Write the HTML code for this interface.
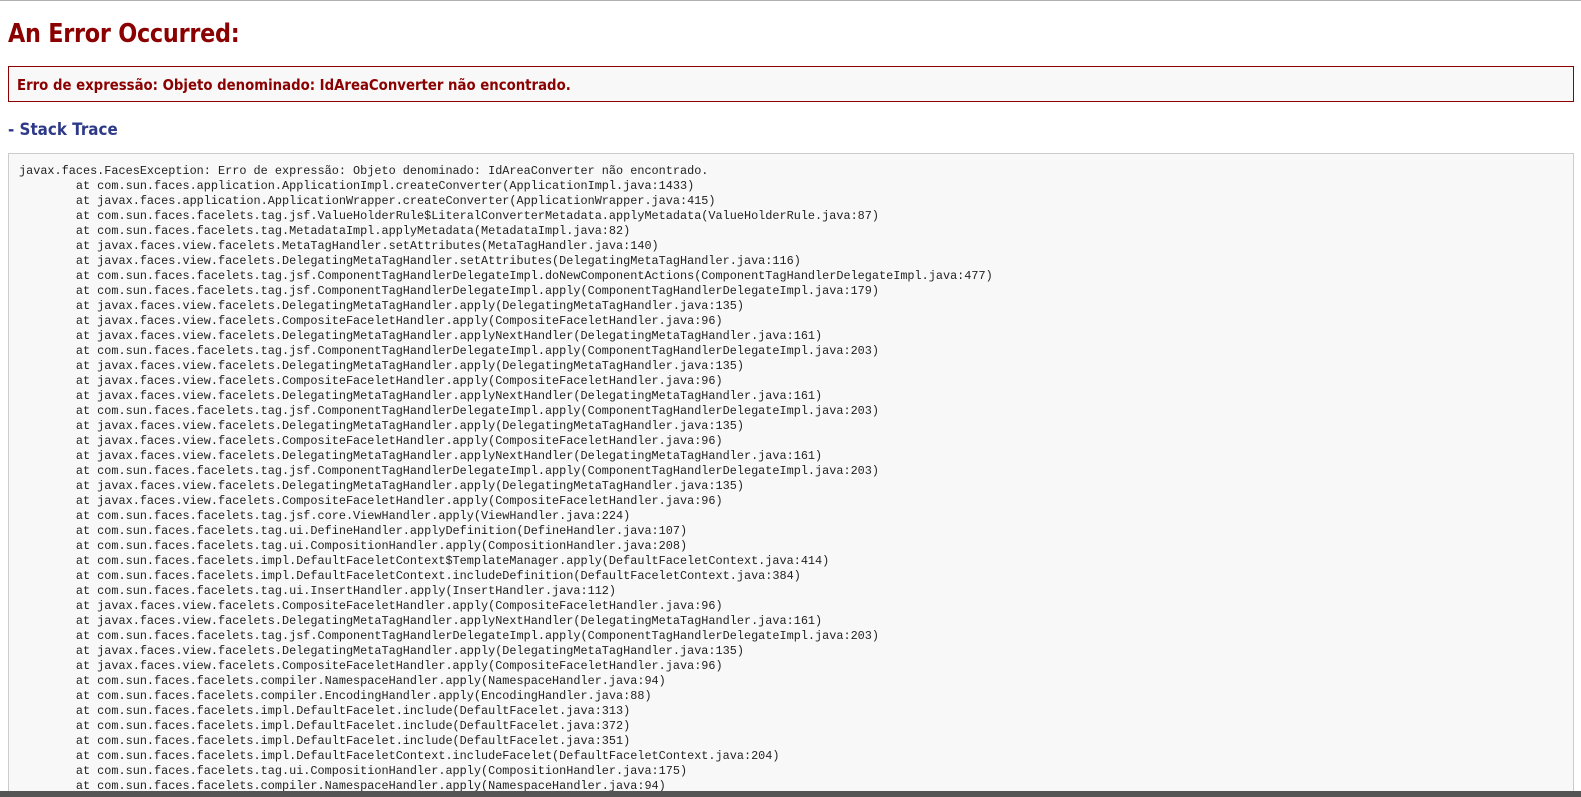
<!DOCTYPE html>
<html><head><meta charset="utf-8">
<style>
html,body{margin:0;padding:0;background:#fff;width:1581px;height:797px;overflow:hidden;position:relative}
.top{position:absolute;left:0;top:0;width:1581px;height:1px;background:#b0b0b0}
h1{position:absolute;left:8px;top:19px;margin:0;font:bold 26px "DejaVu Sans","Liberation Sans",sans-serif;color:#8b0000;letter-spacing:-0.3px;transform:scaleX(0.86);transform-origin:left;white-space:nowrap}
.err{position:absolute;left:8px;top:66px;width:1564px;height:34px;border:1px solid #8b0000;background:#f8f8f8}
.err span{position:absolute;left:8px;top:9px;font:bold 15px "DejaVu Sans","Liberation Sans",sans-serif;color:#8b0000;white-space:nowrap;transform:scaleX(0.886);transform-origin:left}
h2{position:absolute;left:8px;top:120px;margin:0;font:bold 17px "DejaVu Sans","Liberation Sans",sans-serif;color:#2e3a87;transform:scaleX(0.89);transform-origin:left;white-space:nowrap}
.st{position:absolute;left:8px;top:153px;width:1564px;height:660px;border:1px solid #ccc;background:#f8f8f8}
pre{position:absolute;left:10px;top:10px;margin:0;font:11.85px/15px "Liberation Mono",monospace;color:#222;tab-size:8}
.bar{position:absolute;left:0;top:791px;width:1581px;height:6px;background:#555}
</style></head><body>
<div class="top"></div>
<h1>An Error Occurred:</h1>
<div class="err"><span>Erro de expressão: Objeto denominado: IdAreaConverter não encontrado.</span></div>
<h2>- Stack Trace</h2>
<div class="st"><pre>javax.faces.FacesException: Erro de expressão: Objeto denominado: IdAreaConverter não encontrado.
	at com.sun.faces.application.ApplicationImpl.createConverter(ApplicationImpl.java:1433)
	at javax.faces.application.ApplicationWrapper.createConverter(ApplicationWrapper.java:415)
	at com.sun.faces.facelets.tag.jsf.ValueHolderRule$LiteralConverterMetadata.applyMetadata(ValueHolderRule.java:87)
	at com.sun.faces.facelets.tag.MetadataImpl.applyMetadata(MetadataImpl.java:82)
	at javax.faces.view.facelets.MetaTagHandler.setAttributes(MetaTagHandler.java:140)
	at javax.faces.view.facelets.DelegatingMetaTagHandler.setAttributes(DelegatingMetaTagHandler.java:116)
	at com.sun.faces.facelets.tag.jsf.ComponentTagHandlerDelegateImpl.doNewComponentActions(ComponentTagHandlerDelegateImpl.java:477)
	at com.sun.faces.facelets.tag.jsf.ComponentTagHandlerDelegateImpl.apply(ComponentTagHandlerDelegateImpl.java:179)
	at javax.faces.view.facelets.DelegatingMetaTagHandler.apply(DelegatingMetaTagHandler.java:135)
	at javax.faces.view.facelets.CompositeFaceletHandler.apply(CompositeFaceletHandler.java:96)
	at javax.faces.view.facelets.DelegatingMetaTagHandler.applyNextHandler(DelegatingMetaTagHandler.java:161)
	at com.sun.faces.facelets.tag.jsf.ComponentTagHandlerDelegateImpl.apply(ComponentTagHandlerDelegateImpl.java:203)
	at javax.faces.view.facelets.DelegatingMetaTagHandler.apply(DelegatingMetaTagHandler.java:135)
	at javax.faces.view.facelets.CompositeFaceletHandler.apply(CompositeFaceletHandler.java:96)
	at javax.faces.view.facelets.DelegatingMetaTagHandler.applyNextHandler(DelegatingMetaTagHandler.java:161)
	at com.sun.faces.facelets.tag.jsf.ComponentTagHandlerDelegateImpl.apply(ComponentTagHandlerDelegateImpl.java:203)
	at javax.faces.view.facelets.DelegatingMetaTagHandler.apply(DelegatingMetaTagHandler.java:135)
	at javax.faces.view.facelets.CompositeFaceletHandler.apply(CompositeFaceletHandler.java:96)
	at javax.faces.view.facelets.DelegatingMetaTagHandler.applyNextHandler(DelegatingMetaTagHandler.java:161)
	at com.sun.faces.facelets.tag.jsf.ComponentTagHandlerDelegateImpl.apply(ComponentTagHandlerDelegateImpl.java:203)
	at javax.faces.view.facelets.DelegatingMetaTagHandler.apply(DelegatingMetaTagHandler.java:135)
	at javax.faces.view.facelets.CompositeFaceletHandler.apply(CompositeFaceletHandler.java:96)
	at com.sun.faces.facelets.tag.jsf.core.ViewHandler.apply(ViewHandler.java:224)
	at com.sun.faces.facelets.tag.ui.DefineHandler.applyDefinition(DefineHandler.java:107)
	at com.sun.faces.facelets.tag.ui.CompositionHandler.apply(CompositionHandler.java:208)
	at com.sun.faces.facelets.impl.DefaultFaceletContext$TemplateManager.apply(DefaultFaceletContext.java:414)
	at com.sun.faces.facelets.impl.DefaultFaceletContext.includeDefinition(DefaultFaceletContext.java:384)
	at com.sun.faces.facelets.tag.ui.InsertHandler.apply(InsertHandler.java:112)
	at javax.faces.view.facelets.CompositeFaceletHandler.apply(CompositeFaceletHandler.java:96)
	at javax.faces.view.facelets.DelegatingMetaTagHandler.applyNextHandler(DelegatingMetaTagHandler.java:161)
	at com.sun.faces.facelets.tag.jsf.ComponentTagHandlerDelegateImpl.apply(ComponentTagHandlerDelegateImpl.java:203)
	at javax.faces.view.facelets.DelegatingMetaTagHandler.apply(DelegatingMetaTagHandler.java:135)
	at javax.faces.view.facelets.CompositeFaceletHandler.apply(CompositeFaceletHandler.java:96)
	at com.sun.faces.facelets.compiler.NamespaceHandler.apply(NamespaceHandler.java:94)
	at com.sun.faces.facelets.compiler.EncodingHandler.apply(EncodingHandler.java:88)
	at com.sun.faces.facelets.impl.DefaultFacelet.include(DefaultFacelet.java:313)
	at com.sun.faces.facelets.impl.DefaultFacelet.include(DefaultFacelet.java:372)
	at com.sun.faces.facelets.impl.DefaultFacelet.include(DefaultFacelet.java:351)
	at com.sun.faces.facelets.impl.DefaultFaceletContext.includeFacelet(DefaultFaceletContext.java:204)
	at com.sun.faces.facelets.tag.ui.CompositionHandler.apply(CompositionHandler.java:175)
	at com.sun.faces.facelets.compiler.NamespaceHandler.apply(NamespaceHandler.java:94)
	at com.sun.faces.facelets.compiler.EncodingHandler.apply(EncodingHandler.java:88)</pre></div>
<div class="bar"></div>
</body></html>
